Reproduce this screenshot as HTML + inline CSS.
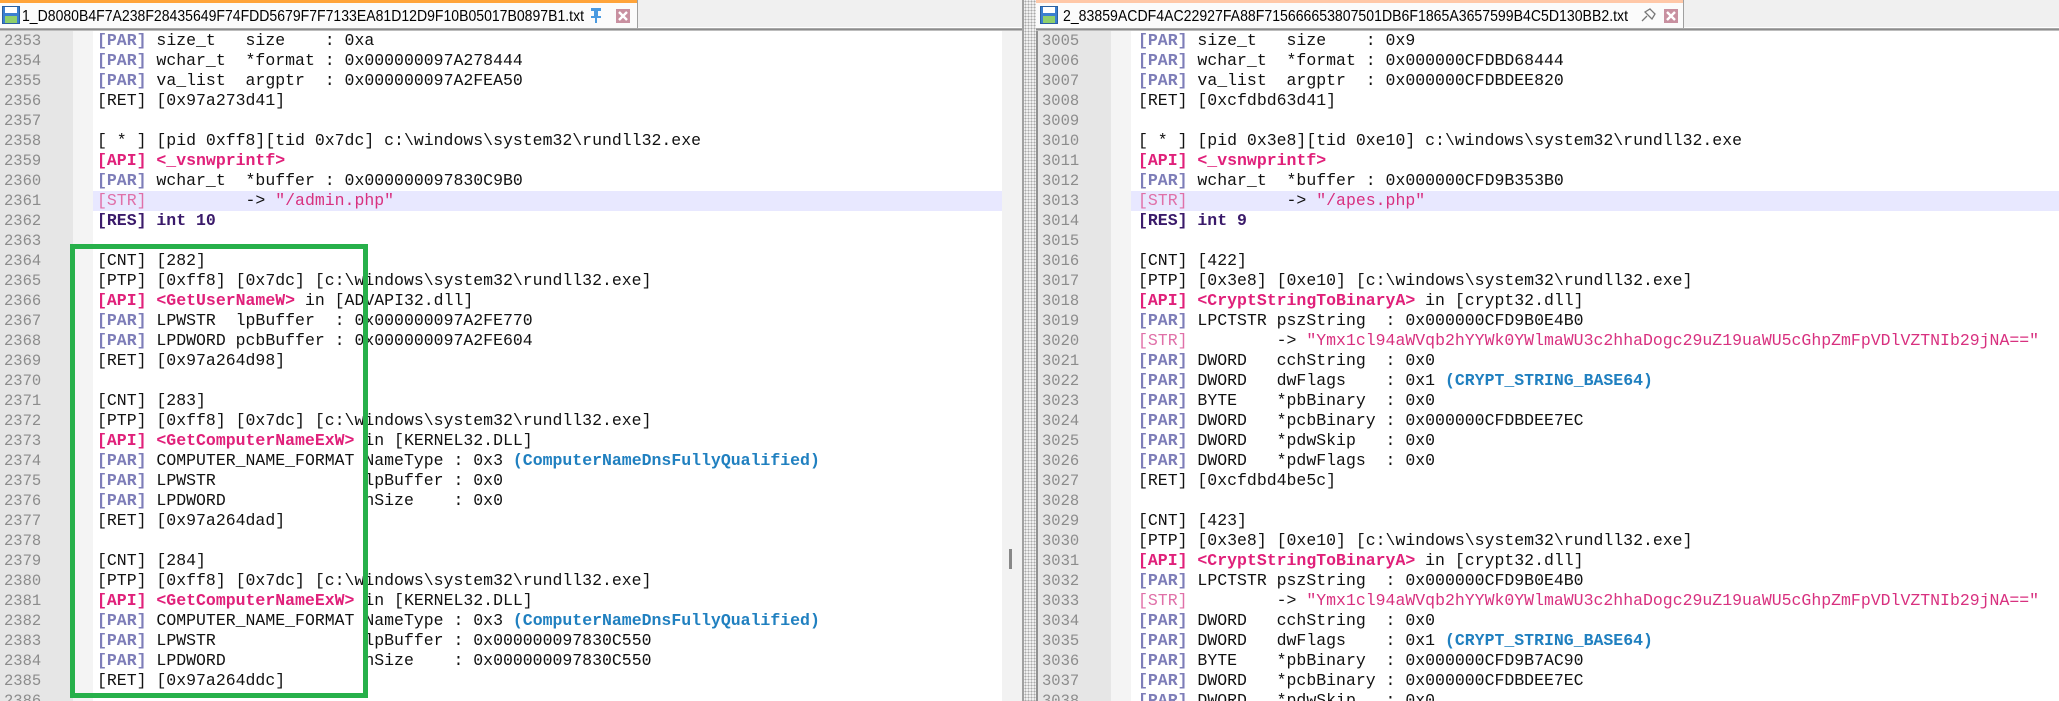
<!DOCTYPE html>
<html><head><meta charset="utf-8"><style>
*{margin:0;padding:0;box-sizing:border-box}
body{width:2059px;height:701px;overflow:hidden;background:#fff;position:relative;font-family:"Liberation Mono",monospace}
.tabbar{position:absolute;left:0;top:0;width:2059px;height:28px;background:#f0f0f0}
.tabline{position:absolute;left:0;top:27px;width:2059px;height:4px;background:linear-gradient(#fff 0 1px,#a8a8a8 1px 2px,#8c8c8c 2px 3px,#bdbdbd 3px)}
.tab{position:absolute;top:0;height:28px;background:#fbfbfb;border-right:1px solid #a0a0a0}
.pane{position:absolute;top:31px;height:670px;overflow:hidden}
.gut{position:absolute;left:0;top:0;width:73px;height:100%;background:#e6e6e6}
.fold{position:absolute;left:73px;top:0;width:20px;height:100%;background:#f4f4f4}
.nums{position:absolute;left:4px;top:0;color:#8c8c8c;font-size:15.5px;line-height:20px;white-space:pre}
.code{position:absolute;left:97px;top:0;font-size:16.5px;line-height:20px;white-space:pre;color:#111}
.hl{position:absolute;left:93px;height:20px;background:#e8e8ff}
.p{color:#7d7db8;font-weight:bold}
.a{color:#e0207a;font-weight:bold}
.s{color:#e070a8}
.v{color:#d8307f}
.r{color:#3a1a6a;font-weight:bold}
.b{color:#2080c0;font-weight:bold}
</style></head><body>
<div class="tabbar"></div>
<div class="tabline"></div>

<div class="tab" style="left:0;width:638px;">
 <div style="position:absolute;left:0;top:0;width:637px;height:3px;background:#ffa43a"></div>
 <svg style="position:absolute;left:2px;top:6px" width="18" height="18" viewBox="0 0 18 18"><rect x="0.5" y="0.5" width="17" height="17" fill="#3a7fd0" stroke="#2a5fa0"/><rect x="3" y="1" width="12" height="6" fill="#fff"/><rect x="3" y="10" width="12" height="7" fill="#8fcf6a"/></svg>
 <svg style="position:absolute;left:0;top:0" width="638" height="28"><text x="22" y="21" font-family="Liberation Sans, sans-serif" font-size="15.5" fill="#000" textLength="562" lengthAdjust="spacingAndGlyphs">1_D8080B4F7A238F28435649F74FDD5679F7F7133EA81D12D9F10B05017B0897B1.txt</text>
 <g fill="#4a9ae0"><rect x="591" y="8" width="10" height="3"/><rect x="594" y="11" width="4" height="6"/><rect x="591" y="16" width="10" height="2"/><rect x="595" y="18" width="2" height="5"/></g>
 <rect x="616" y="9" width="14" height="14" fill="#c890a0"/><path d="M619 12 L627 20 M627 12 L619 20" stroke="#fff" stroke-width="2.4"/></svg>
</div>

<div class="tab" style="left:1036px;width:648px;">
 <div style="position:absolute;left:0;top:0;width:647px;height:3px;background:#ffc8a8"></div>
 <svg style="position:absolute;left:4px;top:6px" width="18" height="18" viewBox="0 0 18 18"><rect x="0.5" y="0.5" width="17" height="17" fill="#3a7fd0" stroke="#2a5fa0"/><rect x="3" y="1" width="12" height="6" fill="#fff"/><rect x="3" y="10" width="12" height="7" fill="#8fcf6a"/></svg>
 <svg style="position:absolute;left:0;top:0" width="648" height="28"><text x="27" y="21" font-family="Liberation Sans, sans-serif" font-size="15.5" fill="#000" textLength="565" lengthAdjust="spacingAndGlyphs">2_83859ACDF4AC22927FA88F715666653807501DB6F1865A3657599B4C5D130BB2.txt</text>
 <path d="M606 21 L611 16 M609 12 L614 9 L619 14 L616 19 Z M609 12 L616 19" stroke="#777" stroke-width="1.3" fill="none"/>
 <rect x="628" y="9" width="14" height="14" fill="#c890a0"/><path d="M631 12 L639 20 M639 12 L631 20" stroke="#fff" stroke-width="2.4"/></svg>
</div>

<!-- left pane -->
<div class="pane" style="left:0;width:1002px;">
 <div class="gut"></div><div class="fold"></div>
 <div class="hl" style="top:160px;width:909px"></div>
<div class="nums">2353
2354
2355
2356
2357
2358
2359
2360
2361
2362
2363
2364
2365
2366
2367
2368
2369
2370
2371
2372
2373
2374
2375
2376
2377
2378
2379
2380
2381
2382
2383
2384
2385
2386</div>
<div class="code"><span class="p">[PAR]</span> size_t   size    : 0xa
<span class="p">[PAR]</span> wchar_t  *format : 0x000000097A278444
<span class="p">[PAR]</span> va_list  argptr  : 0x000000097A2FEA50
[RET] [0x97a273d41]

[ * ] [pid 0xff8][tid 0x7dc] c:\windows\system32\rundll32.exe
<span class="a">[API] &lt;_vsnwprintf&gt;</span>
<span class="p">[PAR]</span> wchar_t  *buffer : 0x000000097830C9B0
<span class="s">[STR]</span>          -&gt; <span class="v">"/admin.php"</span>
<span class="r">[RES] int 10</span>

[CNT] [282]
[PTP] [0xff8] [0x7dc] [c:\windows\system32\rundll32.exe]
<span class="a">[API] &lt;GetUserNameW&gt;</span> in [ADVAPI32.dll]
<span class="p">[PAR]</span> LPWSTR  lpBuffer  : 0x000000097A2FE770
<span class="p">[PAR]</span> LPDWORD pcbBuffer : 0x000000097A2FE604
[RET] [0x97a264d98]

[CNT] [283]
[PTP] [0xff8] [0x7dc] [c:\windows\system32\rundll32.exe]
<span class="a">[API] &lt;GetComputerNameExW&gt;</span> in [KERNEL32.DLL]
<span class="p">[PAR]</span> COMPUTER_NAME_FORMAT NameType : 0x3 <span class="b">(ComputerNameDnsFullyQualified)</span>
<span class="p">[PAR]</span> LPWSTR               lpBuffer : 0x0
<span class="p">[PAR]</span> LPDWORD              nSize    : 0x0
[RET] [0x97a264dad]

[CNT] [284]
[PTP] [0xff8] [0x7dc] [c:\windows\system32\rundll32.exe]
<span class="a">[API] &lt;GetComputerNameExW&gt;</span> in [KERNEL32.DLL]
<span class="p">[PAR]</span> COMPUTER_NAME_FORMAT NameType : 0x3 <span class="b">(ComputerNameDnsFullyQualified)</span>
<span class="p">[PAR]</span> LPWSTR               lpBuffer : 0x000000097830C550
<span class="p">[PAR]</span> LPDWORD              nSize    : 0x000000097830C550
[RET] [0x97a264ddc]
</div>
</div>
<!-- left scrollbar & splitter -->
<div style="position:absolute;left:1002px;top:31px;width:20px;height:670px;background:#f2f2f2"></div>
<div style="position:absolute;left:1009px;top:549px;width:3px;height:20px;background:#888"></div>
<div style="position:absolute;left:1022px;top:0;width:2px;height:701px;background:#a0a0a0"></div>
<div style="position:absolute;left:1024px;top:0;width:12px;height:701px;background-color:#f0f0f0;background-image:radial-gradient(#aaa 45%,transparent 50%);background-size:3px 3px"></div>
<div style="position:absolute;left:1036px;top:31px;width:2px;height:670px;background:#909090"></div>
<div style="position:absolute;left:979px;top:0;width:8px;height:10px;"></div>

<!-- right pane -->
<div class="pane" style="left:1038px;width:1021px;">
 <div class="gut"></div><div class="fold"></div>
 <div class="hl" style="top:160px;width:928px"></div>
<div class="nums">3005
3006
3007
3008
3009
3010
3011
3012
3013
3014
3015
3016
3017
3018
3019
3020
3021
3022
3023
3024
3025
3026
3027
3028
3029
3030
3031
3032
3033
3034
3035
3036
3037
3038</div>
<div class="code" style="left:100px"><span class="p">[PAR]</span> size_t   size    : 0x9
<span class="p">[PAR]</span> wchar_t  *format : 0x000000CFDBD68444
<span class="p">[PAR]</span> va_list  argptr  : 0x000000CFDBDEE820
[RET] [0xcfdbd63d41]

[ * ] [pid 0x3e8][tid 0xe10] c:\windows\system32\rundll32.exe
<span class="a">[API] &lt;_vsnwprintf&gt;</span>
<span class="p">[PAR]</span> wchar_t  *buffer : 0x000000CFD9B353B0
<span class="s">[STR]</span>          -&gt; <span class="v">"/apes.php"</span>
<span class="r">[RES] int 9</span>

[CNT] [422]
[PTP] [0x3e8] [0xe10] [c:\windows\system32\rundll32.exe]
<span class="a">[API] &lt;CryptStringToBinaryA&gt;</span> in [crypt32.dll]
<span class="p">[PAR]</span> LPCTSTR pszString  : 0x000000CFD9B0E4B0
<span class="s">[STR]</span>         -&gt; <span class="v">"Ymx1cl94aWVqb2hYYWk0YWlmaWU3c2hhaDogc29uZ19uaWU5cGhpZmFpVDlVZTNIb29jNA=="</span>
<span class="p">[PAR]</span> DWORD   cchString  : 0x0
<span class="p">[PAR]</span> DWORD   dwFlags    : 0x1 <span class="b">(CRYPT_STRING_BASE64)</span>
<span class="p">[PAR]</span> BYTE    *pbBinary  : 0x0
<span class="p">[PAR]</span> DWORD   *pcbBinary : 0x000000CFDBDEE7EC
<span class="p">[PAR]</span> DWORD   *pdwSkip   : 0x0
<span class="p">[PAR]</span> DWORD   *pdwFlags  : 0x0
[RET] [0xcfdbd4be5c]

[CNT] [423]
[PTP] [0x3e8] [0xe10] [c:\windows\system32\rundll32.exe]
<span class="a">[API] &lt;CryptStringToBinaryA&gt;</span> in [crypt32.dll]
<span class="p">[PAR]</span> LPCTSTR pszString  : 0x000000CFD9B0E4B0
<span class="s">[STR]</span>         -&gt; <span class="v">"Ymx1cl94aWVqb2hYYWk0YWlmaWU3c2hhaDogc29uZ19uaWU5cGhpZmFpVDlVZTNIb29jNA=="</span>
<span class="p">[PAR]</span> DWORD   cchString  : 0x0
<span class="p">[PAR]</span> DWORD   dwFlags    : 0x1 <span class="b">(CRYPT_STRING_BASE64)</span>
<span class="p">[PAR]</span> BYTE    *pbBinary  : 0x000000CFD9B7AC90
<span class="p">[PAR]</span> DWORD   *pcbBinary : 0x000000CFDBDEE7EC
<span class="p">[PAR]</span> DWORD   *pdwSkip   : 0x0
</div>
</div>

<!-- green highlight box -->
<div style="position:absolute;left:70px;top:244px;width:298px;height:454px;border:5px solid #27b04a"></div>
</body></html>
